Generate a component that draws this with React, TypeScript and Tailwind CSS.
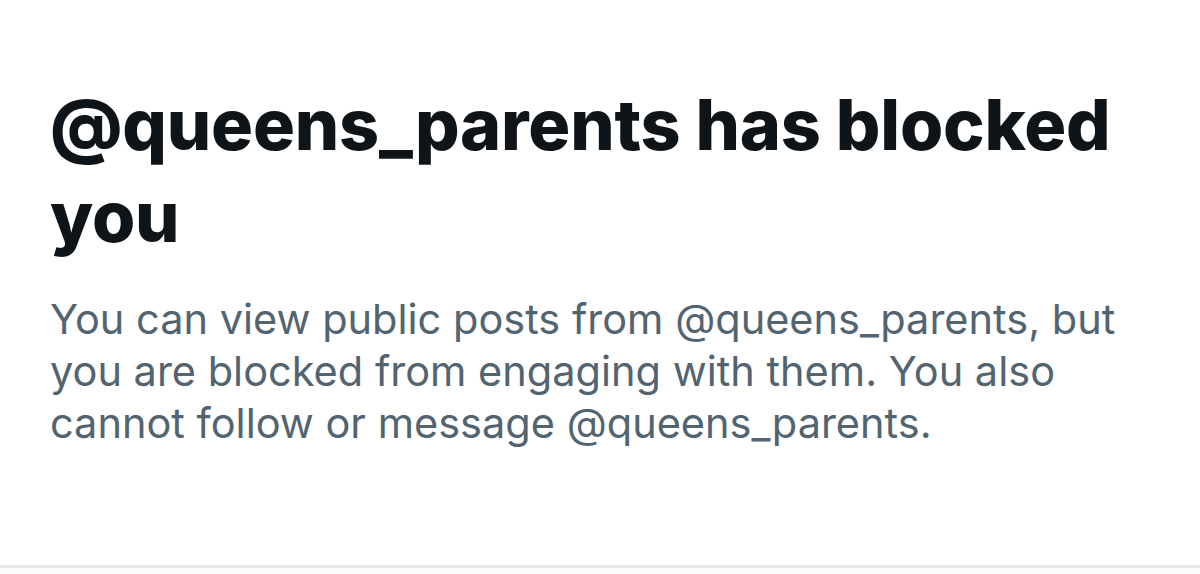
export default function App() {
  return (
    <div className="w-[1200px] h-[574px] bg-white flex flex-col overflow-hidden" style={{ fontFamily: "Inter, 'Liberation Sans', sans-serif" }}>
      <div className="flex-1 pl-[50px] pr-[40px] pt-[79px]">
        <h1 className="text-[70px] leading-[92px] font-extrabold text-[#0f1419] tracking-[-0.2px]">
          @queens_parents has blocked you
        </h1>
        <p className="mt-[30px] text-[41.5px] leading-[52px] text-[#536471]">
          You can view public posts from @queens_parents, but you are blocked from engaging with them. You also cannot follow or message @queens_parents.
        </p>
      </div>
      <div className="h-[3px] bg-[#e6e8e9]" />
      <div className="h-[6px] bg-[#fbfbfb]" />
    </div>
  );
}
